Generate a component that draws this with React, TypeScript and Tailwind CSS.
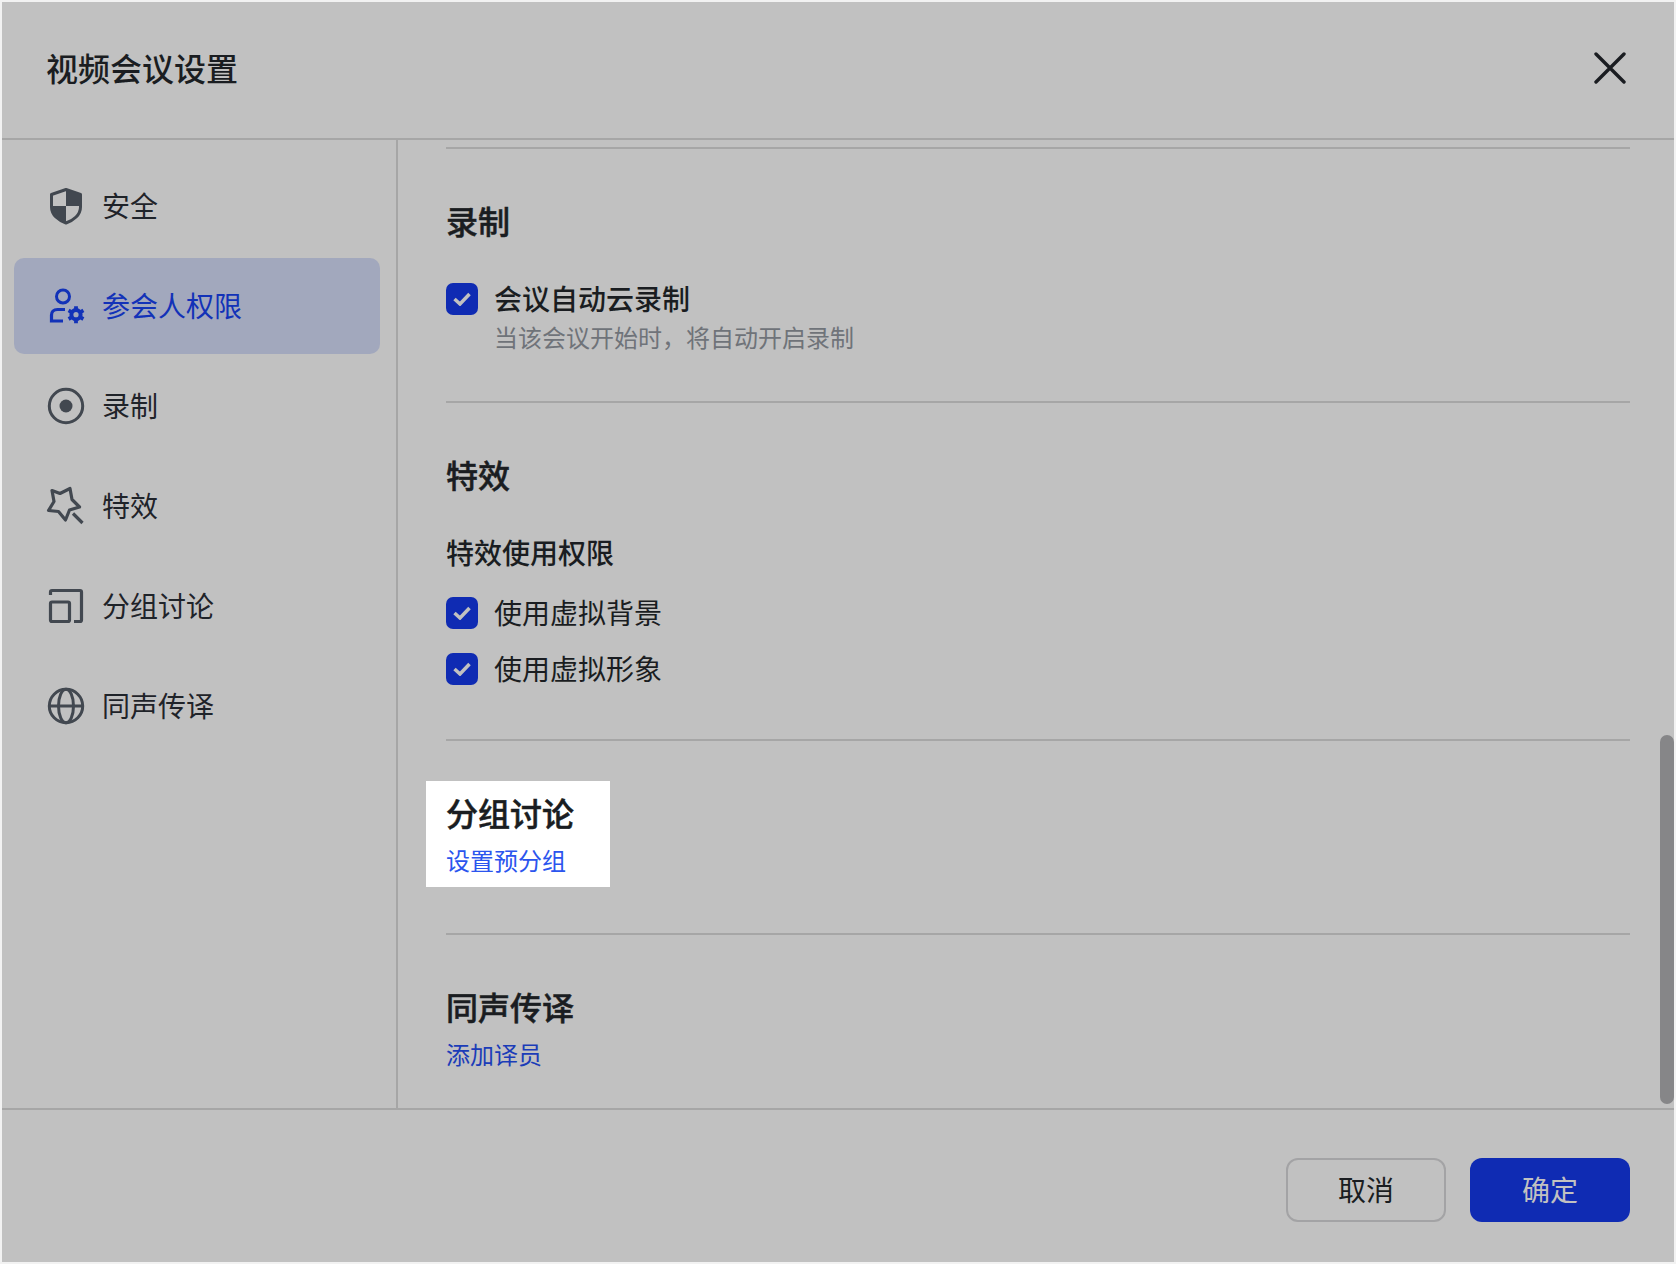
import React from "react";

const C = "#424850";

function Shield({ c }: { c: string }) {
  return (
    <svg width="40" height="40" viewBox="0 0 40 40" fill="none">
      <path d="M20 3.5 L34.5 8.5 V21 C34.5 29 27.5 34.5 20 37 C12.5 34.5 5.5 29 5.5 21 V8.5 Z" stroke={c} strokeWidth="3" strokeLinejoin="round" />
      <path d="M20 3.5 L34.5 8.5 V20 H20 Z M20 20 V37 C12.5 34.5 5.5 29 5.5 20 Z" fill={c} />
    </svg>
  );
}
function PersonGear({ c }: { c: string }) {
  return (
    <svg width="40" height="40" viewBox="0 0 40 40" fill="none">
      <circle cx="17" cy="10.5" r="6.5" stroke={c} strokeWidth="3" />
      <path d="M19 23.5 H11.5 C7.5 23.5 5.5 26 5.5 29 V35 H17" stroke={c} strokeWidth="3.2" />
      <circle cx="30" cy="28.7" r="4.6" stroke={c} strokeWidth="4" />
      <path d="M30 20.2 V23 M30 34.4 V37.2 M22.6 24.4 L25 25.8 M35 31.6 L37.4 33 M22.6 33 L25 31.6 M35 25.8 L37.4 24.4" stroke={c} strokeWidth="3.8" />
    </svg>
  );
}
function Rec({ c }: { c: string }) {
  return (
    <svg width="40" height="40" viewBox="0 0 40 40" fill="none">
      <circle cx="20" cy="20" r="16.7" stroke={c} strokeWidth="3" />
      <circle cx="20" cy="20" r="6.5" fill={c} />
    </svg>
  );
}
function Star({ c }: { c: string }) {
  return (
    <svg width="40" height="40" viewBox="0 0 40 40" fill="none">
      <path d="M6 4.5 L14 7.5 L24 2.5 L26 13.5 L33.5 21 L23.5 24 L19.5 34 L12.5 25.5 L2.5 24.5 L8 15.5 Z" stroke={c} strokeWidth="3.2" strokeLinejoin="round" />
      <path d="M27 27.5 L36.5 37" stroke={c} strokeWidth="3.2" />
    </svg>
  );
}
function Group({ c }: { c: string }) {
  return (
    <svg width="40" height="40" viewBox="0 0 40 40" fill="none">
      <path d="M4.5 9 V6 Q4.5 4.5 6 4.5 H34 Q35.5 4.5 35.5 6 V34 Q35.5 35.5 34 35.5 H28" stroke={c} strokeWidth="3.2" />
      <rect x="4.5" y="16" width="19" height="19.5" rx="1.5" stroke={c} strokeWidth="3.2" />
    </svg>
  );
}
function Globe({ c }: { c: string }) {
  return (
    <svg width="40" height="40" viewBox="0 0 40 40" fill="none">
      <circle cx="20" cy="20" r="16.7" stroke={c} strokeWidth="3" />
      <ellipse cx="20" cy="20" rx="7.5" ry="16.7" stroke={c} strokeWidth="3" />
      <path d="M3.5 20 H36.5" stroke={c} strokeWidth="3" />
    </svg>
  );
}

function Item({ icon: I, label, active }: { icon: (p: { c: string }) => React.ReactElement; label: string; active?: boolean }) {
  return (
    <div className={`h-[96px] mb-[4px] pl-[32px] flex items-center gap-[16px] rounded-[10px] ${active ? "bg-[#a2a8bd]" : ""}`}>
      <I c={active ? "#1232b8" : C} />
      <span className={`text-[28px] leading-[40px] pb-[2px] ${active ? "text-[#1232b8]" : "text-[#1f2329]"}`}>{label}</span>
    </div>
  );
}

function Check({ label, medium }: { label: string; medium?: boolean }) {
  return (
    <div className="flex items-center h-[40px] gap-[16px]">
      <span className="w-[32px] h-[32px] rounded-[7px] bg-[#0f2bb3] flex items-center justify-center shrink-0">
        <svg width="18" height="14" viewBox="0 0 18 14" fill="none">
          <path d="M1.5 7 L7 12 L16.5 2" stroke="#c1c1c1" strokeWidth="3.5" />
        </svg>
      </span>
      <span className={`text-[28px] leading-[40px] pb-[2px] text-[#1a1d21] ${medium ? "font-medium" : ""}`}>{label}</span>
    </div>
  );
}

export default function App() {
  return (
    <div
      className="w-[1676px] h-[1264px] bg-[#f2f2f2] p-[2px] overflow-hidden"
      style={{ fontFamily: '"Noto Sans CJK SC", sans-serif' }}
    >
      <div className="relative w-full h-full bg-[#c1c1c1] flex flex-col">
        <header className="h-[138px] shrink-0 border-b-2 border-[#a6a6a6] flex items-center justify-between pl-[44px] pr-[48px]">
          <h1 className="text-[32px] leading-[44px] font-medium text-[#1a1d21] -mt-[7px]">视频会议设置</h1>
          <svg width="32" height="32" viewBox="0 0 32 32" fill="none" className="-mt-[4px]">
            <path d="M2 2 L30 30 M30 2 L2 30" stroke="#1a1d21" strokeWidth="3.4" strokeLinecap="round" />
          </svg>
        </header>

        <div className="flex flex-1 min-h-0">
          <aside className="w-[396px] shrink-0 border-r-2 border-[#a6a6a6] pt-[18px] pl-[12px] pr-[16px]">
            <Item icon={Shield} label="安全" />
            <Item icon={PersonGear} label="参会人权限" active />
            <Item icon={Rec} label="录制" />
            <Item icon={Star} label="特效" />
            <Item icon={Group} label="分组讨论" />
            <Item icon={Globe} label="同声传译" />
          </aside>

          <main className="flex-1 min-w-0 overflow-hidden pl-[48px] pr-[44px]">
            <div className="mt-[7px] h-[2px] bg-[#a6a6a6]" />
            <h2 className="mt-[49px] text-[32px] leading-[44px] font-medium [-webkit-text-stroke:0.5px_#1a1d21] text-[#1a1d21]">录制</h2>
            <div className="mt-[37px]">
              <Check label="会议自动云录制" medium />
            </div>
            <p className="mt-[2px] ml-[48px] text-[24px] leading-[32px] text-[#6f7379]">当该会议开始时，将自动开启录制</p>
            <div className="mt-[48px] h-[2px] bg-[#a6a6a6]" />

            <h2 className="mt-[49px] text-[32px] leading-[44px] font-medium [-webkit-text-stroke:0.5px_#1a1d21] text-[#1a1d21]">特效</h2>
            <h3 className="mt-[36px] text-[28px] leading-[40px] font-medium text-[#1a1d21]">特效使用权限</h3>
            <div className="mt-[21px]">
              <Check label="使用虚拟背景" />
            </div>
            <div className="mt-[16px]">
              <Check label="使用虚拟形象" />
            </div>
            <div className="mt-[50px] h-[2px] bg-[#a6a6a6]" />

            <section className="mt-[40px] -ml-[20px] w-[184px] h-[106px] bg-white pl-[20px] pt-[9px]">
              <h2 className="text-[32px] leading-[44px] font-medium [-webkit-text-stroke:0.5px_#1a1d21] text-[#1a1d21] whitespace-nowrap">分组讨论</h2>
              <a className="block mt-[10px] text-[24px] leading-[32px] text-[#2b55ee] whitespace-nowrap">设置预分组</a>
            </section>
            <div className="mt-[46px] h-[2px] bg-[#a6a6a6]" />

            <h2 className="mt-[49px] text-[32px] leading-[44px] font-medium [-webkit-text-stroke:0.5px_#1a1d21] text-[#1a1d21]">同声传译</h2>
            <a className="block mt-[10px] text-[24px] leading-[32px] text-[#1b3cb8]">添加译员</a>
          </main>
        </div>

        <footer className="h-[154px] shrink-0 border-t-2 border-[#a6a6a6] flex justify-end items-start gap-[24px] pt-[48px] pr-[44px]">
          <button className="w-[160px] h-[64px] rounded-[12px] border-2 border-[#a3a3a5] text-[28px] text-[#1a1d21] pb-[2px]">取消</button>
          <button className="w-[160px] h-[64px] rounded-[12px] bg-[#0f2bb3] text-[28px] text-[#c1c1c1] pb-[2px]">确定</button>
        </footer>

        <div className="absolute left-[1658px] top-[733px] w-[14px] h-[369px] rounded-[7px] bg-[#868688]" />
      </div>
    </div>
  );
}
